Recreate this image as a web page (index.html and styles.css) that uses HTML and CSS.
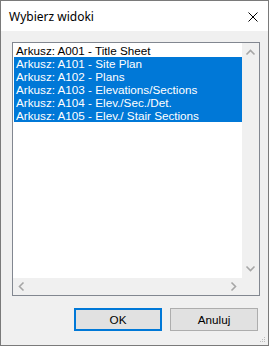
FILE: index.html
```html
<!DOCTYPE html>
<html lang="pl">
<head>
    <meta charset="UTF-8">
    <title>Wybierz widoki</title>
    <link rel="stylesheet" href="styles.css">
</head>
<body>
    <div class="window">
        <div class="titlebar">
            <span class="title">Wybierz widoki</span>
            <svg class="close" width="10" height="10" viewBox="0 0 10 10">
                <path d="M0.5 0.5 L9.5 9.5 M9.5 0.5 L0.5 9.5" stroke="#000" stroke-width="1" fill="none"/>
            </svg>
        </div>
        <div class="content">
            <div class="listbox">
                <ul class="items">
                    <li>Arkusz: A001 - Title Sheet</li>
                    <li class="selected">Arkusz: A101 - Site Plan</li>
                    <li class="selected">Arkusz: A102 - Plans</li>
                    <li class="selected">Arkusz: A103 - Elevations/Sections</li>
                    <li class="selected">Arkusz: A104 - Elev./Sec./Det.</li>
                    <li class="selected">Arkusz: A105 - Elev./ Stair Sections</li>
                </ul>
                <div class="vscroll">
                    <svg width="17" height="17" viewBox="0 0 17 17"><path d="M4.5 10.5 L8.5 6.5 L12.5 10.5" stroke="#a6a6a6" stroke-width="1.6" fill="none"/></svg>
                    <svg width="17" height="17" viewBox="0 0 17 17"><path d="M4.5 6.5 L8.5 10.5 L12.5 6.5" stroke="#a6a6a6" stroke-width="1.6" fill="none"/></svg>
                </div>
                <div class="hscroll">
                    <svg width="17" height="17" viewBox="0 0 17 17"><path d="M10.5 4.5 L6.5 8.5 L10.5 12.5" stroke="#a6a6a6" stroke-width="1.6" fill="none"/></svg>
                    <svg width="17" height="17" viewBox="0 0 17 17"><path d="M6.5 4.5 L10.5 8.5 L6.5 12.5" stroke="#a6a6a6" stroke-width="1.6" fill="none"/></svg>
                </div>
                <div class="corner"></div>
            </div>
            <div class="buttons">
                <button type="button" class="btn default">OK</button>
                <button type="button" class="btn">Anuluj</button>
            </div>
        </div>
        <svg class="grip" width="6" height="6" viewBox="0 0 6 6">
            <rect x="4" y="0" width="1" height="1" fill="#bcbcbc"/>
            <rect x="2" y="2" width="1" height="1" fill="#bcbcbc"/>
            <rect x="4" y="2" width="1" height="1" fill="#bcbcbc"/>
            <rect x="0" y="4" width="1" height="1" fill="#bcbcbc"/>
            <rect x="2" y="4" width="1" height="1" fill="#bcbcbc"/>
            <rect x="4" y="4" width="1" height="1" fill="#bcbcbc"/>
        </svg>
    </div>
</body>
</html>
```

FILE: styles.css
```css
body {
    margin: 0;
    font-family: "Liberation Sans", Arial, sans-serif;
}
.window {
    position: relative;
    width: 269px;
    height: 346px;
    box-sizing: border-box;
    border: 1px solid #7a7a7a;
    background: #f0f0f0;
    display: flex;
    flex-direction: column;
}
.titlebar {
    height: 30px;
    flex: none;
    background: #fff;
    display: flex;
    align-items: center;
    justify-content: space-between;
    padding: 0 10px 0 8px;
}
.title {
    font-family: "Noto Sans", sans-serif;
    font-size: 12px;
    color: #000;
    margin-top: 1px;
}
.close {
    display: block;
    margin-top: 1px;
}
.content {
    padding: 11px 9px 0 11px;
}
.listbox {
    width: 248px;
    height: 254px;
    box-sizing: border-box;
    border: 1px solid #828790;
    background: #fff;
    display: grid;
    grid-template-columns: 1fr 17px;
    grid-template-rows: 1fr 17px;
}
.items {
    list-style: none;
    margin: 0;
    padding: 1px 0 0 1px;
    overflow: hidden;
}
.items li {
    height: 13px;
    line-height: 13px;
    font-size: 11.7px;
    padding-left: 2px;
    color: #000;
    white-space: nowrap;
}
.items li.selected {
    background: #0078d7;
    color: #fff;
}
.vscroll {
    background: #f0f0f0;
    display: flex;
    flex-direction: column;
    justify-content: space-between;
    padding: 1px 0 1px 0;
}
.hscroll {
    background: #f0f0f0;
    display: flex;
    justify-content: space-between;
}
.corner {
    background: #f0f0f0;
}
.buttons {
    display: flex;
    justify-content: flex-end;
    gap: 8px;
    margin-top: 12px;
    padding-right: 1px;
}
.btn {
    width: 88px;
    height: 23px;
    box-sizing: border-box;
    border: 1px solid #adadad;
    background: #e1e1e1;
    font-family: "Liberation Sans", Arial, sans-serif;
    font-size: 11.7px;
    color: #000;
    padding: 0;
}
.btn.default {
    border: 2px solid #0078d7;
}
.grip {
    position: absolute;
    right: 2px;
    bottom: 2px;
}
```
